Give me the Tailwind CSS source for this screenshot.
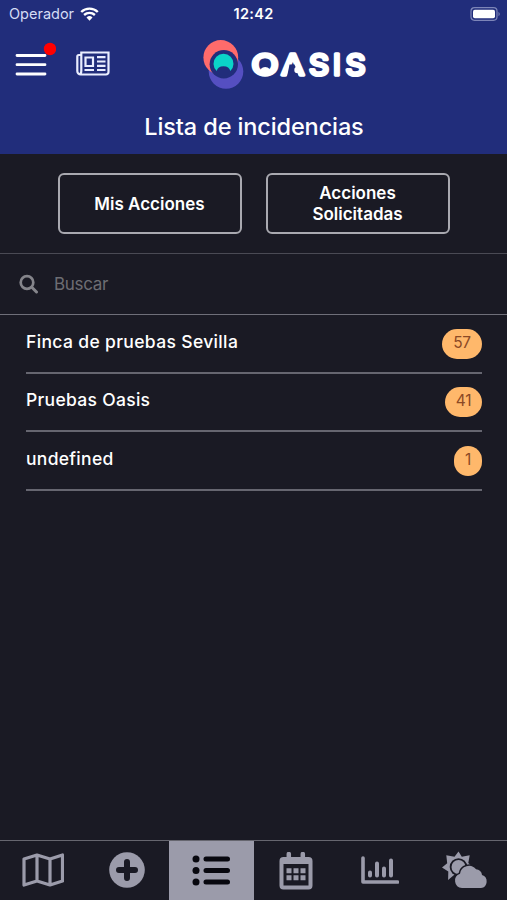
<!DOCTYPE html>
<html lang="es">
<head>
    <meta charset="UTF-8">
    <meta name="viewport" content="width=device-width, initial-scale=1.0">
    <title>Oasis - Lista de incidencias</title>
    <script src="https://cdn.jsdelivr.net/npm/@tailwindcss/browser@4"></script>
</head>
<body class="bg-[#1a1a24] text-white font-['Inter',sans-serif]">
    <div class="flex flex-col h-screen overflow-hidden">

        <header class="h-[154px] shrink-0 bg-[#212d7b]">
            <!-- Barra de estado -->
            <div class="grid grid-cols-3 items-center h-[27px] pl-[9px] pr-[6px]">
                <div class="flex items-center gap-[6px] text-[14.5px] text-[#d5dcf5]">
                    <span>Operador</span>
                    <svg class="w-[19px] h-[14px]" viewBox="0 0 19 14" fill="none" stroke="#fff" stroke-width="2.4">
                        <path d="M1.2 5A12 12 0 0 1 17.8 5M4.1 8a8 8 0 0 1 10.8 0"/>
                        <path d="M6.5 10.4a4.5 4.5 0 0 1 6 0L9.5 13.7z" fill="#fff" stroke="none"/>
                    </svg>
                </div>
                <div class="text-center text-[14.5px] font-semibold tracking-[0.3px] pr-[3px]">12:42</div>
                <svg class="w-[31px] h-[14px] justify-self-end" viewBox="0 0 31 14">
                    <rect x="1" y=".7" width="26" height="12.6" rx="3.5" fill="none" stroke="#7d85b8" stroke-width="1.2"/>
                    <rect x="3" y="2.7" width="22" height="8.6" rx="1.8" fill="#fff"/>
                    <path d="M28.5 4.7q2.5 2.3 0 4.6z" fill="#7d85b8"/>
                </svg>
            </div>

            <div class="grid grid-cols-[200px_1fr] h-[73px] items-center">
                <div class="flex items-center gap-[20px] pl-[15px]">
                    <button class="block" aria-label="Menú">
                        <svg class="block w-[41px] h-[44px]" viewBox="0 0 41 44">
                            <path d="M2 13.5h28M2 22.7h28M2 32h28" stroke="#fff" stroke-width="2.8" stroke-linecap="round"/>
                            <circle cx="35" cy="7" r="6.2" fill="#f00"/>
                        </svg>
                    </button>
                    <button class="block" aria-label="Noticias">
                        <svg class="block w-[34px] h-[25px]" viewBox="0 0 34 25" fill="none" stroke="#e9edff" stroke-width="2.2">
                            <path d="M5 4H2.8Q1.3 4 1.3 5.5V20a3.4 3.4 0 0 0 3.4 3.5H30a2.5 2.5 0 0 0 2.5-2.5V1.5H5.3V20q0 3-2 3.3"/>
                            <path d="M9.5 6.5h7.5v8.5H9.5zM21 6.2h8.5M21 10.5h8.5M21 14.8h8.5M21 19h8.5M8.5 19H18"/>
                        </svg>
                    </button>
                </div>
                <!-- Logo -->
                <svg class="w-[170px] h-[54px]" viewBox="0 0 170 54">
                    <circle cx="26" cy="34.5" r="17.3" fill="#554fc1"/>
                    <circle cx="20.8" cy="20.5" r="17.4" fill="#ff6b6b"/>
                    <circle cx="23.8" cy="27.3" r="14.2" fill="#212d7b"/>
                    <path d="M16.7 34a10 10 0 1 1 13.6 0q-1-4.8-6.8-4.8t-6.8 4.8z" fill="#0bd3c8"/>
                    <g fill="#fff" stroke="#fff" stroke-width="3.4" stroke-linejoin="round" font-family="Inter" font-size="29" font-weight="400">
                        <text x="51.5" y="38.2" textLength="27" lengthAdjust="spacingAndGlyphs">O</text>
                        <text x="81.3" y="38.2" textLength="23" lengthAdjust="spacingAndGlyphs">A</text>
                        <text x="109" y="38.2" textLength="20" lengthAdjust="spacingAndGlyphs">S</text>
                        <text x="133" y="38.2">I</text>
                        <text x="145.5" y="38.2" textLength="20" lengthAdjust="spacingAndGlyphs">S</text>
                    </g>
                    <path d="M59 37q1-7 6.2-7t6.2 7z" fill="#fff"/>
                    <path d="M89.5 27.500h5l1.500 3.500 2.500 9H87z" fill="#212d7b"/>
                    <circle cx="97.5" cy="33" r="3.2" fill="#fff"/>
                </svg>
            </div>

            <h1 class="text-center text-[23.5px] leading-[54px] font-medium tracking-[-0.12px] pl-px">Lista de incidencias</h1>
        </header>

        <main class="flex-1">
            <!-- Acciones -->
            <div class="flex justify-center gap-[24px] h-[99px] pt-[19px]">
                <button class="w-[184px] h-[61px] pt-px border-2 border-[#a9a9b0] rounded-md text-[17px] leading-[21px] font-semibold">Mis Acciones</button>
                <button class="w-[184px] h-[61px] pt-px border-2 border-[#a9a9b0] rounded-md text-[17px] leading-[21px] font-semibold">Acciones<br>Solicitadas</button>
            </div>

            <!-- Buscador -->
            <div class="flex items-center gap-[15px] h-[62px] pl-[19px] border-t border-b border-t-[#4a4a54] border-b-[#6f6f79]">
                <svg class="w-[20px] h-[20px]" viewBox="0 0 20 20" fill="none" stroke="#85858b" stroke-linecap="round">
                    <circle cx="8" cy="8.5" r="6.3" stroke-width="2.7"/>
                    <path d="M12.8 13.3l4.7 4.7" stroke-width="3"/>
                </svg>
                <span class="pt-[2px] text-[17px] tracking-[-0.3px] text-[#6d6d73]">Buscar</span>
            </div>

            <ul class="pl-[26px] pr-[25px] text-[17.5px] font-medium">
                <li class="flex items-start justify-between h-[58.6px] pt-[13.5px] border-b-2 border-[#666670]">
                    <span class="leading-[26px] tracking-[0.35px]">Finca de pruebas Sevilla</span>
                    <span class="w-[40px] h-[30px] rounded-full bg-[#ffb86b] text-[#8b4925] text-[15.5px] font-normal text-center leading-[27px] tracking-[-0.3px]">57</span>
                </li>
                <li class="flex items-start justify-between h-[58.6px] pt-[13.5px] border-b-2 border-[#666670]">
                    <span class="leading-[26px] tracking-[0.3px]">Pruebas Oasis</span>
                    <span class="w-[37px] h-[30px] rounded-full bg-[#ffb86b] text-[#8b4925] text-[15.5px] font-normal text-center leading-[27px] tracking-[-0.3px]">41</span>
                </li>
                <li class="flex items-start justify-between h-[58.6px] pt-[13.5px] border-b-2 border-[#666670]">
                    <span class="leading-[26px] tracking-[0.3px]">undefined</span>
                    <span class="w-[28px] h-[30px] rounded-full bg-[#ffb86b] text-[#8b4925] text-[15.5px] font-normal text-center leading-[27px] tracking-[-0.3px]">1</span>
                </li>
            </ul>
        </main>

        <!-- Menú inferior -->
        <nav class="grid grid-cols-6 h-[60px] shrink-0 border-t border-[#66666f] text-[#9b9baa]">
            <a class="flex justify-center pt-[12px] pl-[2px]">
                <svg class="w-[42px] h-[34px]" viewBox="0 0 42 34" fill="none" stroke="currentColor" stroke-width="3.2" stroke-linejoin="round">
                    <path d="M2 6l13-4 13 4 12.5-4v26L28 32l-13-4-13 4zM15 2v26M28 6v26"/>
                </svg>
            </a>
            <a class="flex justify-center pt-[11px] pl-px">
                <svg class="w-[36px] h-[36px]" viewBox="0 0 36 36">
                    <circle cx="18" cy="18" r="17.8" fill="currentColor"/>
                    <path d="M18 10v16M10 18h16" stroke="#1a1a24" stroke-width="6" stroke-linecap="round"/>
                </svg>
            </a>
            <a class="flex justify-center pt-[14px] bg-[#9b9baa] text-[#08080f]">
                <svg class="w-[38px] h-[32px]" viewBox="0 0 38 32">
                    <g fill="currentColor">
                        <circle cx="4" cy="4" r="3.5"/>
                        <circle cx="4" cy="15.5" r="3.5"/>
                        <circle cx="4" cy="27" r="3.5"/>
                    </g>
                    <path d="M14 4h21.5M14 15.5h21.5M14 27h21.5" stroke="currentColor" stroke-width="5" stroke-linecap="round"/>
                </svg>
            </a>
            <a class="flex justify-center pt-[11px]">
                <svg class="w-[34px] h-[38px]" viewBox="0 0 34 38">
                    <path d="M9.8 2v6M23.8 2v6" stroke="currentColor" stroke-width="4.5" stroke-linecap="round"/>
                    <rect x="2.5" y="7" width="29" height="28.5" rx="2" fill="none" stroke="currentColor" stroke-width="4"/>
                    <path d="M2 6h30v6H2z" fill="currentColor"/>
                    <path d="M7.5 18.8h19M7.5 25.8h19" stroke="currentColor" stroke-width="5" stroke-dasharray="5 2"/>
                </svg>
            </a>
            <a class="flex justify-center pt-[15px]">
                <svg class="w-[38px] h-[28px]" viewBox="0 0 38 28" fill="none" stroke="currentColor" stroke-width="3.6" stroke-linecap="round" stroke-linejoin="round">
                    <path d="M2 2v24h34.5"/>
                    <path d="M9 16.5v3M16 7.5v12M23 12.5v7M30 4.5v15" stroke-width="4"/>
                </svg>
            </a>
            <a class="flex justify-center pt-[10px]">
                <svg class="w-[46px] h-[38px]" viewBox="0 0 46 38">
                    <path d="M16.5.5l3.3 5.3 7.9-1.5-1.4 7.7 5 4.5-5 4.5-12.500 1.500-7.700 6.500.200-8.500L0 16.500l5.200-4.300L4.300 4.300l8.200 1.500z" fill="currentColor"/>
                    <circle cx="16.5" cy="16" r="8.8" fill="#1a1a24"/>
                    <circle cx="16.5" cy="16" r="7" fill="currentColor"/>
                    <path d="M20 37a7.3 7.3 0 0 1-2-14.2A9 9 0 0 1 34 18.300a6 6 0 0 1 6 5.700A6.700 6.700 0 0 1 39 37z" fill="currentColor" stroke="#1a1a24" stroke-width="3" paint-order="stroke"/>
                </svg>
            </a>
        </nav>
    </div>
</body>
</html>
